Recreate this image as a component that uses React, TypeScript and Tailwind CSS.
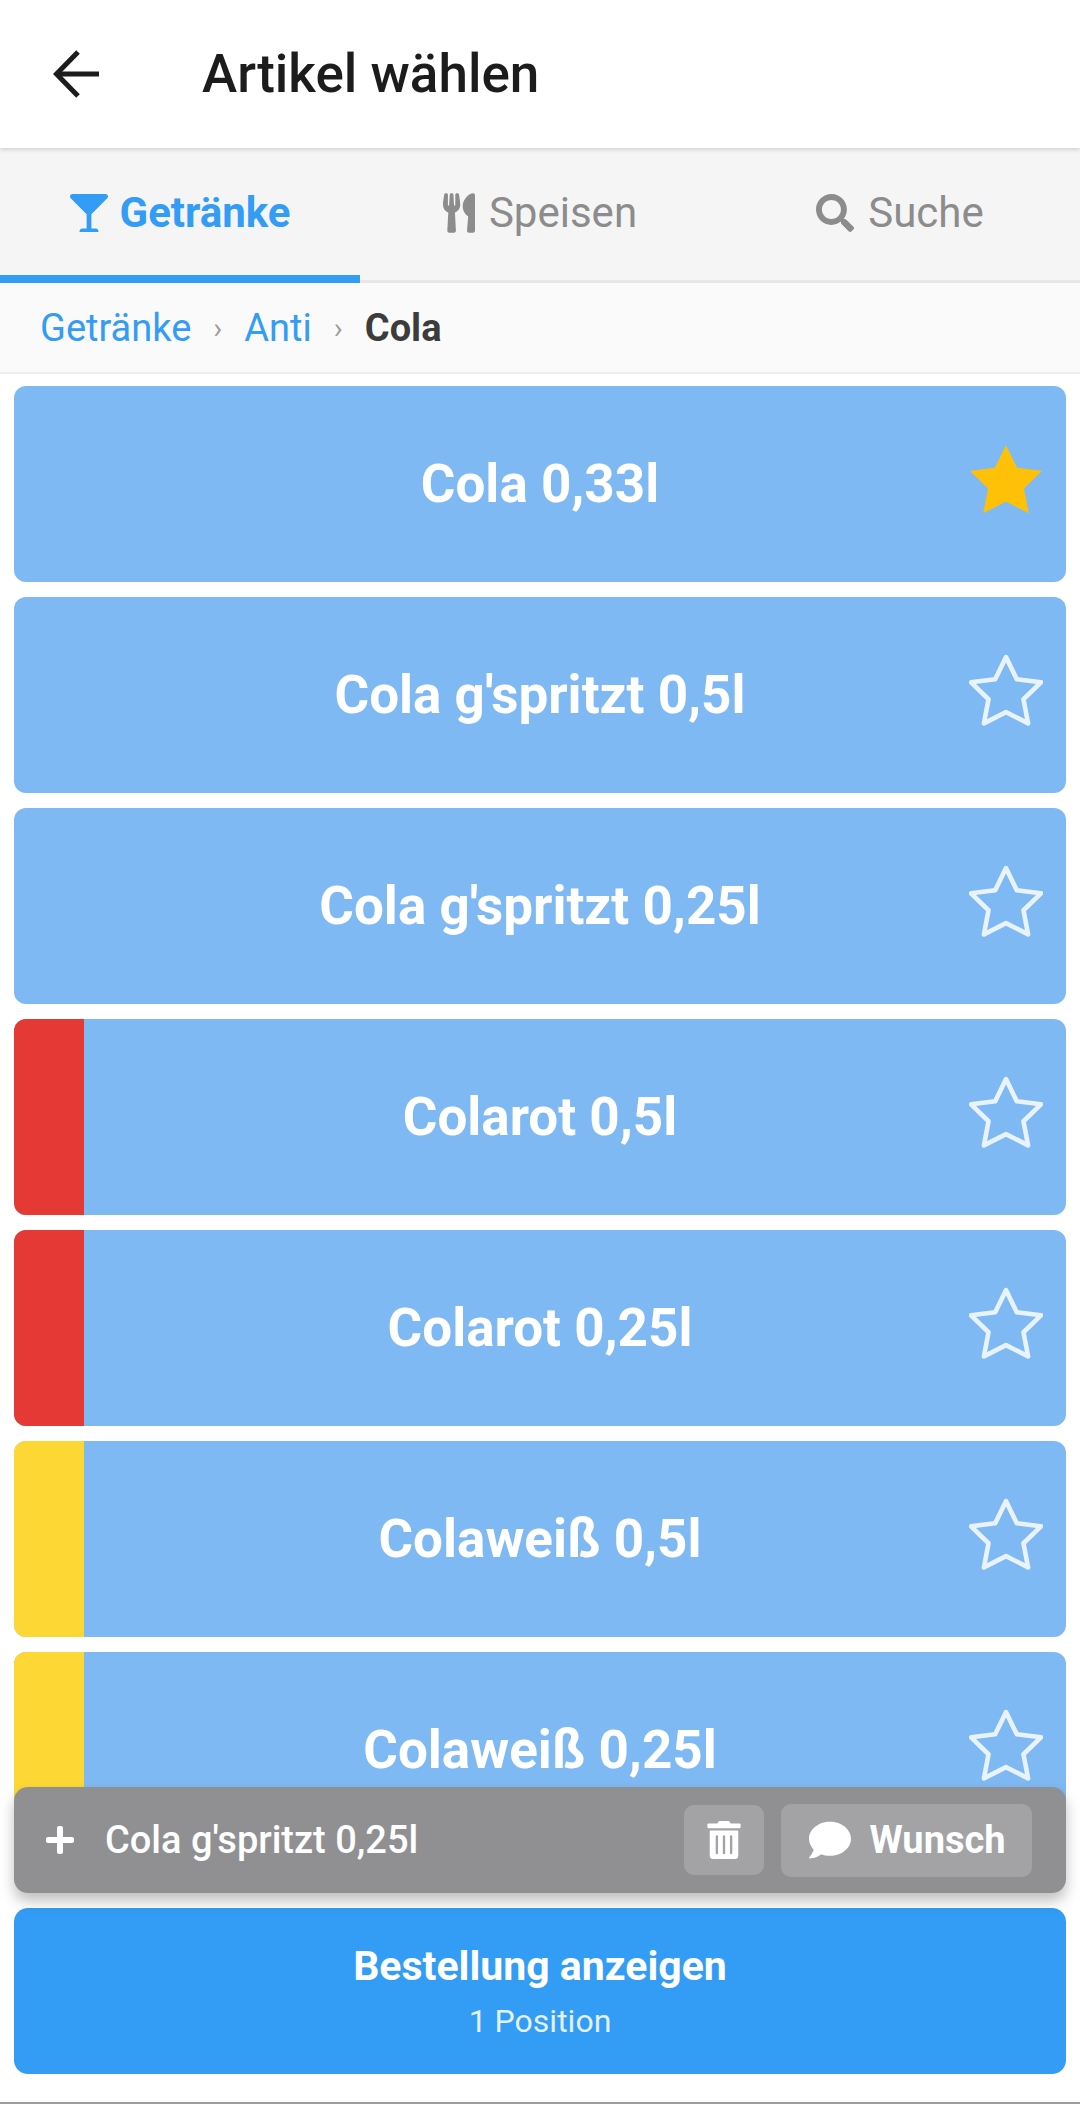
import { FaGlassMartini, FaUtensils, FaSearch, FaTrashAlt, FaComment, FaPlus } from "react-icons/fa";

const items = [
  { name: "Cola 0,33l", fav: true },
  { name: "Cola g'spritzt 0,5l" },
  { name: "Cola g'spritzt 0,25l" },
  { name: "Colarot 0,5l", color: "bg-[#e53935]" },
  { name: "Colarot 0,25l", color: "bg-[#e53935]" },
  { name: "Colaweiß 0,5l", color: "bg-[#fdd835]" },
  { name: "Colaweiß 0,25l", color: "bg-[#fdd835]" },
];

function Star({ fav }: { fav?: boolean }) {
  const pts = "36,4 46.5,25.5 70,28.5 53,45 57.5,68.5 36,57.5 14.5,68.5 19,45 2,28.5 25.5,25.5";
  return (
    <svg viewBox="0 0 72 72" className="w-[74px] h-[74px]">
      <polygon
        points={pts}
        fill={fav ? "#ffc107" : "none"}
        stroke={fav ? "#ffc107" : "#e9f3fd"}
        strokeWidth={fav ? 1 : 4.5}
        strokeLinejoin="round"
      />
    </svg>
  );
}

function Card({ name, fav, color }: { name: string; fav?: boolean; color?: string }) {
  return (
    <div className="relative flex h-[196px] shrink-0 items-center justify-center overflow-hidden rounded-[12px] bg-[#7eb9f3]">
      {color && <div className={`absolute left-0 top-0 bottom-0 w-[70px] ${color}`} />}
      <span className="text-[53px] font-bold text-white leading-none">{name}</span>
      <div className="absolute right-[23px] top-[56px]">
        <Star fav={fav} />
      </div>
    </div>
  );
}

export default function App() {
  return (
    <div className="relative flex h-[2104px] w-[1080px] flex-col overflow-hidden bg-white font-['Roboto',sans-serif]">
      <header className="z-10 flex h-[148px] shrink-0 items-center bg-white pl-[53px] shadow-[0_2px_4px_rgba(0,0,0,0.14)]">
        <svg viewBox="0 0 48 48" className="h-[48px] w-[48px]" fill="none" stroke="#1c1c1c" strokeWidth="5">
          <path d="M46 24H4" />
          <path d="M25 2 3.5 24 25 46" />
        </svg>
        <h1 className="ml-[101px] text-[53px] font-medium text-[#1c1c1c] leading-none">Artikel wählen</h1>
      </header>

      <nav className="grid h-[135px] shrink-0 grid-cols-3 border-b-[3px] border-[#e6e6e6] bg-[#f5f5f5]">
        <div className="flex h-[135px] items-center justify-center gap-[12px] border-b-[8px] border-[#339cf5] pt-[2px] text-[#339cf5]">
          <FaGlassMartini className="h-[38px] w-[38px]" />
          <span className="text-[42px] font-bold leading-none">Getränke</span>
        </div>
        <div className="flex items-center justify-center gap-[14px] pb-[6px] text-[#8c8c8c]">
          <FaUtensils className="h-[40px] w-[32px]" />
          <span className="text-[42px] leading-none">Speisen</span>
        </div>
        <div className="flex items-center justify-center gap-[14px] pb-[6px] text-[#8c8c8c]">
          <FaSearch className="h-[38px] w-[38px]" />
          <span className="text-[42px] leading-none">Suche</span>
        </div>
      </nav>

      <div className="flex h-[91px] shrink-0 items-center border-b-[2px] border-[#eeeeee] bg-[#fafafa] pl-[40px] text-[38px] leading-none">
        <span className="text-[#339cf5]">Getränke</span>
        <span className="mx-[22px] text-[30px] text-[#9e9e9e]">›</span>
        <span className="text-[#339cf5]">Anti</span>
        <span className="mx-[22px] text-[30px] text-[#9e9e9e]">›</span>
        <span className="font-bold text-[#3c3c3c]">Cola</span>
      </div>

      <main className="flex min-h-0 flex-1 flex-col gap-[15px] overflow-hidden px-[14px] pt-[12px]">
        {items.map((it) => (
          <Card key={it.name} {...it} />
        ))}
      </main>

      <div className="absolute left-[14px] right-[14px] top-[1787px] flex h-[106px] items-center rounded-[14px] bg-[#909093] pl-[30px] pr-[34px] text-white shadow-[0_8px_14px_rgba(0,0,0,0.25)]">
        <FaPlus className="h-[32px] w-[32px]" />
        <span className="ml-[29px] text-[38px] font-medium leading-none">Cola g'spritzt 0,25l</span>
        <div className="ml-auto flex h-[70px] w-[80px] items-center justify-center rounded-[10px] bg-[#a3a3a6]">
          <FaTrashAlt className="h-[38px] w-[34px]" />
        </div>
        <div className="ml-[17px] flex h-[73px] w-[251px] items-center justify-center gap-[16px] rounded-[10px] bg-[#a3a3a6]">
          <FaComment className="h-[42px] w-[46px]" />
          <span className="text-[38px] font-bold leading-none">Wunsch</span>
        </div>
      </div>

      <footer className="shrink-0 border-b-[2px] border-[#9e9e9e] bg-white px-[14px] pt-[14px] pb-[28px]">
        <div className="flex h-[166px] flex-col items-center justify-center rounded-[14px] bg-[#339cf5] text-white">
          <span className="text-[41px] font-bold leading-none">Bestellung anzeigen</span>
          <span className="mt-[18px] text-[32px] leading-none text-[#e3f1fd]">1 Position</span>
        </div>
      </footer>
    </div>
  );
}
